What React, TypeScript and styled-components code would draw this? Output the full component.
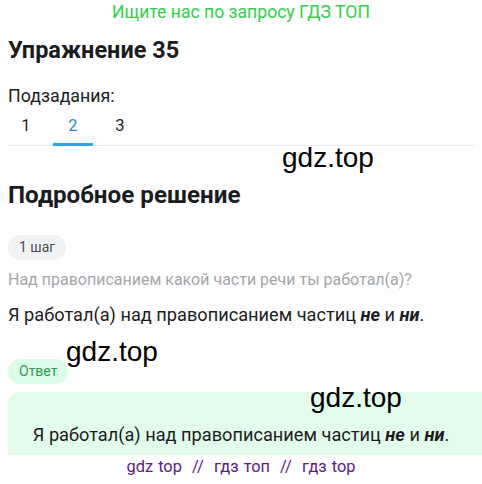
import styled, { createGlobalStyle } from 'styled-components';

const GlobalStyle = createGlobalStyle`
  body {
    margin: 0;
    font-family: Roboto, "Noto Sans", sans-serif;
    background: #fff;
    color: #1b1c21;
  }
`;

const Page = styled.div`
  position: relative;
  width: 482px;
  height: 484px;
  overflow: hidden;
  padding: 0 8px;
  box-sizing: border-box;
`;

const Promo = styled.div`
  text-align: center;
  color: #2fd14a;
  font-size: 17.6px;
  line-height: 24px;
`;

const Title = styled.h1`
  margin: 11px 0 0;
  font-size: 23.5px;
  line-height: 30px;
  font-weight: 700;
`;

const Label = styled.div`
  margin-top: 20px;
  font-size: 17.8px;
  line-height: 22px;
`;

const Tabs = styled.div`
  display: flex;
  gap: 7px;
  margin-top: 9px;
  border-bottom: 1px solid #e6e8ea;
`;

const Tab = styled.div<{ active?: boolean }>`
  width: 40px;
  padding: 0 0 10px;
  text-align: center;
  font-size: 16.5px;
  line-height: 20px;
  color: ${(p) => (p.active ? '#2d8fc6' : '#1b1c21')};
  box-shadow: ${(p) => (p.active ? 'inset 0 -3px 0 #29a9df' : 'none')};
  margin-bottom: -1px;
  &:first-child {
    margin-left: -2px;
  }
`;

const Subtitle = styled.h2`
  margin: 34px 0 0;
  font-size: 24.2px;
  line-height: 30px;
  font-weight: 700;
`;

const Pill = styled.div<{ tone: 'grey' | 'green' }>`
  width: fit-content;
  padding: 0 11px;
  height: 25px;
  line-height: 25px;
  border-radius: 13px;
  font-size: 14px;
  background: ${(p) => (p.tone === 'green' ? '#dcfbe6' : '#f1f2f4')};
  color: ${(p) => (p.tone === 'green' ? '#2f9a57' : '#4a4c52')};
`;

const StepPill = styled(Pill)`
  margin-top: 25px;
`;

const AnswerPill = styled(Pill)`
  margin-top: 32px;
`;

const Question = styled.div`
  margin-top: 9px;
  font-size: 16px;
  line-height: 22px;
  color: #a3a6ab;
`;

const Body = styled.div`
  margin-top: 12px;
  font-size: 18.2px;
  line-height: 24px;
  color: #1b1c21;
  b {
    font-style: italic;
  }
`;

const AnswerBox = styled.div`
  margin: 8px -8px 0 0;
  height: 63px;
  background: #e2fdeb;
  border-radius: 12px 0 0 0;
  padding: 31px 8px 0 0;
  box-sizing: border-box;
  text-align: center;
  font-size: 18.2px;
  line-height: 24px;
  b {
    font-style: italic;
  }
`;

const Footer = styled.div`
  text-align: center;
  margin-top: 1px;
  font-size: 16.4px;
  line-height: 22px;
  color: #5a2184;
  word-spacing: 1px;
`;

const Mark = styled.div<{ x: number; y: number }>`
  position: absolute;
  left: ${(p) => p.x}px;
  top: ${(p) => p.y}px;
  font-family: "Liberation Sans", Arial, sans-serif;
  font-size: 28px;
  line-height: 32px;
  color: #000;
  pointer-events: none;
`;

export default function App() {
  return (
    <Page>
      <GlobalStyle />
      <Promo>Ищите нас по запросу ГДЗ ТОП</Promo>
      <Title>Упражнение 35</Title>
      <Label>Подзадания:</Label>
      <Tabs>
        <Tab>1</Tab>
        <Tab active>2</Tab>
        <Tab>3</Tab>
      </Tabs>
      <Subtitle>Подробное решение</Subtitle>
      <StepPill tone="grey">1 шаг</StepPill>
      <Question>Над правописанием какой части речи ты работал(а)?</Question>
      <Body>
        Я работал(а) над правописанием частиц <b>не</b> и <b>ни</b>.
      </Body>
      <AnswerPill tone="green">Ответ</AnswerPill>
      <AnswerBox>
        Я работал(а) над правописанием частиц <b>не</b> и <b>ни</b>.
      </AnswerBox>
      <Footer>gdz top &nbsp;//&nbsp; гдз топ &nbsp;//&nbsp; гдз top</Footer>
      <Mark x={282} y={142}>gdz.top</Mark>
      <Mark x={66} y={336}>gdz.top</Mark>
      <Mark x={310} y={382}>gdz.top</Mark>
    </Page>
  );
}
